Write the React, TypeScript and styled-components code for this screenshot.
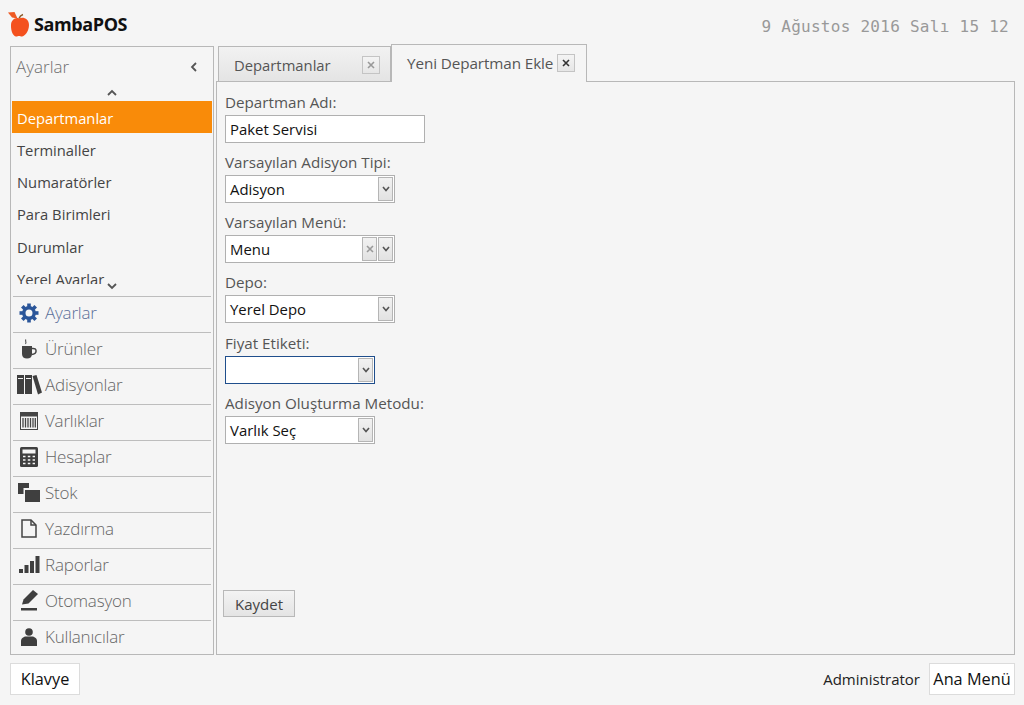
import React from "react";
import styled, { createGlobalStyle } from "styled-components";

const GlobalStyle = createGlobalStyle`
  html, body {
    margin: 0;
    height: 705px;
    overflow: hidden;
    background: #f5f5f5;
  }
  * {
    box-sizing: border-box;
  }
`;

const FONT = `"Open Sans", "Noto Sans", sans-serif`;

const AppleLogo = () => (
  <svg width="22" height="25" viewBox="0 0 22 25">
    <path d="M0 0.5 L6.5 0 L9.5 6.5 L4 5.5 Z" fill="#ee5a24" />
    <path d="M11 6.5 Q12 3.5 15 2.5" fill="none" stroke="#8a5a28" strokeWidth="1.5" />
    <path
      d="M11 6.5 C15 4.5 21 6.5 21 13 C21 19.5 16.5 24.5 14 24.5 C12.8 24.5 12 24 11 24 C10 24 9.3 24.5 8 24.5 C5.5 24.5 2.7 19.5 3 13 C3.2 8 7.5 5 11 6.5 Z"
      fill="#f4511e"
    />
  </svg>
);

const GearIcon = () => (
  <svg width="20" height="20" viewBox="0 0 20 20">
    <circle cx="10" cy="10" r="5.2" fill="none" stroke="#2a5599" strokeWidth="3.4" />
    <g stroke="#2a5599" strokeWidth="3.6">
      <path d="M10 0.5V4" />
      <path d="M10 16V19.5" />
      <path d="M0.5 10H4" />
      <path d="M16 10H19.5" />
      <path d="M3.3 3.3L5.8 5.8" />
      <path d="M14.2 14.2L16.7 16.7" />
      <path d="M3.3 16.7L5.8 14.2" />
      <path d="M14.2 5.8L16.7 3.3" />
    </g>
  </svg>
);

const CupIcon = () => (
  <svg width="16" height="20" viewBox="0 0 16 20">
    <path d="M5 0.5C3.5 2 6 3 4.5 5" fill="none" stroke="#555" strokeWidth="1.1" />
    <path d="M1 7H11V15C11 18 9 19.5 6 19.5C3 19.5 1 18 1 15Z" fill="#444" />
    <path d="M11 9.5C16.5 8.5 16.5 15 10.5 15.5" fill="none" stroke="#444" strokeWidth="1.5" />
  </svg>
);

const BooksIcon = () => (
  <svg width="25" height="20" viewBox="0 0 25 20">
    <rect x="0" y="0" width="7" height="19" fill="#3f3f3f" />
    <rect x="8" y="0" width="7" height="19" fill="#3f3f3f" />
    <path d="M1 3.5H6M9 3.5H14" stroke="#f5f5f5" strokeWidth="1" />
    <path d="M15.5 1L19.5 0L25 17.5L21 19.5Z" fill="#3f3f3f" />
  </svg>
);

const TableIcon = () => (
  <svg width="18" height="18" viewBox="0 0 18 18">
    <rect x="0.5" y="0.5" width="17" height="17" fill="none" stroke="#444" />
    <rect x="0.5" y="0.5" width="17" height="4" fill="#444" />
    <path d="M3 6V15.5M5.5 6V15.5M8 6V15.5M10.5 6V15.5M13 6V15.5M15.3 6V15.5" stroke="#444" strokeWidth="1.3" />
  </svg>
);

const CalculatorIcon = () => (
  <svg width="18" height="20" viewBox="0 0 18 20">
    <rect x="0" y="0" width="18" height="20" rx="1.5" fill="#3f3f3f" />
    <rect x="2.5" y="2.5" width="13" height="4" fill="#f5f5f5" />
    <path d="M3 9.5H5.5M7.8 9.5H10.3M12.6 9.5H15M3 13H5.5M7.8 13H10.3M12.6 13H15M3 16.5H5.5M7.8 16.5H10.3M12.6 16.5H15" stroke="#f5f5f5" strokeWidth="1.7" />
  </svg>
);

const StockIcon = () => (
  <svg width="22" height="20" viewBox="0 0 22 20">
    <path d="M0 0H11V5H5.5V11H0Z" fill="#3f3f3f" />
    <rect x="7" y="7" width="15" height="12" fill="#3f3f3f" />
  </svg>
);

const PageIcon = () => (
  <svg width="16" height="19" viewBox="0 0 16 19">
    <path d="M1 1H10L15 6V18H1Z" fill="none" stroke="#444" strokeWidth="1.5" />
    <path d="M10 1V6H15" fill="none" stroke="#444" strokeWidth="1.5" />
  </svg>
);

const BarsIcon = () => (
  <svg width="21" height="17" viewBox="0 0 21 17">
    <rect x="0" y="13" width="4" height="4" fill="#3f3f3f" />
    <rect x="5.5" y="9" width="4" height="8" fill="#3f3f3f" />
    <rect x="11" y="5" width="4" height="12" fill="#3f3f3f" />
    <rect x="16.5" y="0" width="4" height="17" fill="#3f3f3f" />
  </svg>
);

const PenIcon = () => (
  <svg width="17" height="21" viewBox="0 0 17 21">
    <path d="M12 0L17 4L7.5 13.5L1 14.5L2.5 9.5Z" fill="#3f3f3f" />
    <rect x="0" y="18" width="16" height="2.5" fill="#3f3f3f" />
  </svg>
);

const UserIcon = () => (
  <svg width="16" height="18" viewBox="0 0 16 18">
    <circle cx="8" cy="4" r="3.8" fill="#3f3f3f" />
    <path d="M0 18V13C0 10 3 8.5 5 8.5H11C13 8.5 16 10 16 13V18Z" fill="#3f3f3f" />
  </svg>
);

const Chevron = ({ dir }: { dir: "up" | "down" | "left" }) => {
  const d = dir === "up" ? "M1 6L5 2L9 6" : dir === "down" ? "M1 2L5 6L9 2" : "M6 1L2 5L6 9";
  return (
    <svg width="10" height="10" viewBox="0 0 10 8" style={{ overflow: "visible", flexShrink: 0 }}>
      <path d={d} fill="none" stroke="#555" strokeWidth="1.8" />
    </svg>
  );
};

const ComboArrow = () => (
  <svg width="8" height="6" viewBox="0 0 8 6">
    <path d="M1 1L4 4.5L7 1" fill="none" stroke="#555" strokeWidth="1.6" />
  </svg>
);

const CrossIcon = ({ dark }: { dark?: boolean }) => (
  <svg width="8" height="8" viewBox="0 0 8 8">
    <path d="M1 1L7 7M7 1L1 7" stroke={dark ? "#333" : "#999"} strokeWidth="1.6" />
  </svg>
);

const navItems = [
  { label: "Ayarlar", icon: <GearIcon />, active: true },
  { label: "Ürünler", icon: <CupIcon /> },
  { label: "Adisyonlar", icon: <BooksIcon /> },
  { label: "Varlıklar", icon: <TableIcon /> },
  { label: "Hesaplar", icon: <CalculatorIcon /> },
  { label: "Stok", icon: <StockIcon /> },
  { label: "Yazdırma", icon: <PageIcon /> },
  { label: "Raporlar", icon: <BarsIcon /> },
  { label: "Otomasyon", icon: <PenIcon /> },
  { label: "Kullanıcılar", icon: <UserIcon /> },
];

const subItems = ["Departmanlar", "Terminaller", "Numaratörler", "Para Birimleri", "Durumlar", "Yerel Ayarlar"];

function ComboField({
  label,
  value,
  width,
  clearable,
  focused,
  tall,
}: {
  label: string;
  value: string;
  width: number;
  clearable?: boolean;
  focused?: boolean;
  tall?: boolean;
}) {
  return (
    <Field $tall={tall}>
      <FieldLabel>{label}</FieldLabel>
      <Combo $width={width} $focused={focused}>
        <ComboValue>{value}</ComboValue>
        {clearable && (
          <ComboButton>
            <CrossIcon />
          </ComboButton>
        )}
        <ComboButton>
          <ComboArrow />
        </ComboButton>
      </Combo>
    </Field>
  );
}

export default function App() {
  return (
    <Page>
      <GlobalStyle />
      <Header>
        <Logo>
          <AppleLogo />
          <LogoText>SambaPOS</LogoText>
        </Logo>
        <Clock>9 Ağustos 2016 Salı 15 12</Clock>
      </Header>

      <Body>
        <Sidebar>
          <SidebarTitle>
            <span>Ayarlar</span>
            <Chevron dir="left" />
          </SidebarTitle>
          <ScrollArrow>
            <Chevron dir="up" />
          </ScrollArrow>
          <SubList>
            {subItems.map((item, i) => (
              <SubItem key={item} $selected={i === 0}>
                {item}
              </SubItem>
            ))}
          </SubList>
          <BottomArrow>
            <Chevron dir="down" />
          </BottomArrow>
          <Nav>
            {navItems.map((item) => (
              <NavRow key={item.label}>
                <NavIcon>{item.icon}</NavIcon>
                <NavLabel $active={item.active}>{item.label}</NavLabel>
              </NavRow>
            ))}
          </Nav>
        </Sidebar>

        <Main>
          <Tabs>
            <Tab>
              <TabLabel>Departmanlar</TabLabel>
              <CloseButton>
                <CrossIcon />
              </CloseButton>
            </Tab>
            <ActiveTab>
              <ActiveTabLabel>Yeni Departman Ekle</ActiveTabLabel>
              <CloseButton>
                <CrossIcon dark />
              </CloseButton>
            </ActiveTab>
          </Tabs>
          <Panel>
            <Form>
              <Field>
                <FieldLabel>Departman Adı:</FieldLabel>
                <TextBox>Paket Servisi</TextBox>
              </Field>
              <ComboField label="Varsayılan Adisyon Tipi:" value="Adisyon" width={170} />
              <ComboField label="Varsayılan Menü:" value="Menu" width={170} clearable />
              <ComboField label="Depo:" value="Yerel Depo" width={170} tall />
              <ComboField label="Fiyat Etiketi:" value="" width={150} focused />
              <ComboField label="Adisyon Oluşturma Metodu:" value="Varlık Seç" width={150} />
            </Form>
            <SaveButton>Kaydet</SaveButton>
          </Panel>
        </Main>
      </Body>

      <Footer>
        <FooterButton $width={70}>Klavye</FooterButton>
        <FooterRight>
          <UserName>Administrator</UserName>
          <FooterButton $width={86}>Ana Menü</FooterButton>
        </FooterRight>
      </Footer>
    </Page>
  );
}

const Page = styled.div`
  width: 1024px;
  height: 705px;
  display: flex;
  flex-direction: column;
  background: #f5f5f5;
  font-family: ${FONT};
  overflow: hidden;
`;

const Header = styled.header`
  height: 46px;
  flex-shrink: 0;
  padding: 0 15px 0 8px;
  display: flex;
  align-items: center;
  justify-content: space-between;
`;

const Logo = styled.div`
  display: flex;
  align-items: center;
  gap: 4px;
  margin-top: 2px;
`;

const LogoText = styled.span`
  font-size: 18px;
  font-weight: 700;
  letter-spacing: -0.4px;
  color: #111;
`;

const Clock = styled.div`
  font-family: "DejaVu Sans Mono", monospace;
  font-size: 16px;
  letter-spacing: 0.27px;
  color: #999;
  margin-top: 7px;
  white-space: nowrap;
`;

const Body = styled.div`
  height: 609px;
  flex-shrink: 0;
  padding: 0 9px 0 10px;
  display: flex;
  gap: 2px;
`;

const Sidebar = styled.aside`
  width: 204px;
  flex-shrink: 0;
  border: 1px solid #b8b8b8;
  display: flex;
  flex-direction: column;
`;

const SidebarTitle = styled.div`
  height: 38px;
  flex-shrink: 0;
  padding: 0 13px 0 5px;
  display: flex;
  align-items: center;
  justify-content: space-between;
  font-size: 17px;
  font-weight: 300;
  color: #6e6e6e;
`;

const ScrollArrow = styled.div`
  height: 16px;
  flex-shrink: 0;
  display: flex;
  align-items: center;
  justify-content: center;
`;

const SubList = styled.div`
  height: 183px;
  flex-shrink: 0;
  padding: 0 1px;
  overflow: hidden;
`;

const SubItem = styled.div<{ $selected?: boolean }>`
  height: 32.25px;
  padding: 1px 0 0 5px;
  display: flex;
  align-items: center;
  font-size: 14.75px;
  color: ${({ $selected }) => ($selected ? "#fff" : "#444")};
  background: ${({ $selected }) => ($selected ? "#f98b09" : "transparent")};
`;

const BottomArrow = styled.div`
  height: 12px;
  flex-shrink: 0;
  padding-bottom: 8px;
  display: flex;
  align-items: center;
  justify-content: center;
`;

const Nav = styled.nav`
  flex: 1;
  padding: 0 2px;
  display: flex;
  flex-direction: column;
`;

const NavRow = styled.div`
  height: 36px;
  flex-shrink: 0;
  padding-bottom: 4px;
  border-top: 1px solid #bdbdbd;
  display: flex;
  align-items: center;
`;

const NavIcon = styled.div`
  width: 32px;
  flex-shrink: 0;
  display: flex;
  align-items: center;
  justify-content: center;
`;

const NavLabel = styled.span<{ $active?: boolean }>`
  font-size: 17px;
  font-weight: 300;
  letter-spacing: -0.2px;
  color: ${({ $active }) => ($active ? "#5a6f99" : "#666")};
`;

const Main = styled.main`
  flex: 1;
  min-width: 0;
  display: flex;
  flex-direction: column;
`;

const Tabs = styled.div`
  height: 35px;
  flex-shrink: 0;
  padding-left: 2px;
  display: flex;
  align-items: flex-end;
  position: relative;
  z-index: 1;
`;

const Tab = styled.div`
  width: 173px;
  height: 35px;
  padding: 2px 10px 0 15px;
  border: 1px solid #b8b8b8;
  border-bottom: none;
  background: linear-gradient(#f2f2f2, #e4e4e4);
  display: flex;
  align-items: center;
  justify-content: space-between;
`;

const ActiveTab = styled.div`
  width: 196px;
  height: 38px;
  margin-bottom: -1px;
  padding: 0 11px 2px 15px;
  border: 1px solid #b8b8b8;
  border-bottom: none;
  background: #f5f5f5;
  display: flex;
  align-items: center;
  justify-content: space-between;
`;

const TabLabel = styled.span`
  font-size: 14.8px;
  line-height: 20px;
  color: #555;
  white-space: nowrap;
`;

const ActiveTabLabel = styled(TabLabel)`
  font-size: 15.25px;
  letter-spacing: -0.1px;
`;

const CloseButton = styled.div`
  width: 18px;
  height: 18px;
  border: 1px solid #c4c4c4;
  background: linear-gradient(#f4f4f4, #e6e6e6);
  display: flex;
  align-items: center;
  justify-content: center;
`;

const Panel = styled.section`
  flex: 1;
  border: 1px solid #b8b8b8;
  padding: 11px 0 37px 6px;
  display: flex;
  flex-direction: column;
  align-items: flex-start;
`;

const Form = styled.div`
  flex: 1;
  padding-left: 2px;
  display: flex;
  flex-direction: column;
`;

const Field = styled.div<{ $tall?: boolean }>`
  height: ${({ $tall }) => ($tall ? 61 : 60)}px;
  flex-shrink: 0;
  display: flex;
  flex-direction: column;
`;

const FieldLabel = styled.label`
  height: 22px;
  font-size: 15.2px;
  line-height: 18px;
  color: #555;
  white-space: nowrap;
`;

const TextBox = styled.div`
  width: 200px;
  height: 28px;
  border: 1px solid #b0b0b0;
  background: #fff;
  padding-left: 4px;
  display: flex;
  align-items: center;
  font-size: 14.9px;
  color: #111;
`;

const Combo = styled.div<{ $width: number; $focused?: boolean }>`
  width: ${({ $width }) => $width}px;
  height: 28px;
  border: 1px solid ${({ $focused }) => ($focused ? "#1f4e8c" : "#b0b0b0")};
  background: #fff;
  padding: 1px 1px 1px 4px;
  display: flex;
  align-items: stretch;
  gap: 1px;
`;

const ComboValue = styled.div`
  flex: 1;
  min-width: 0;
  display: flex;
  align-items: center;
  font-size: 14.9px;
  color: #111;
`;

const ComboButton = styled.div`
  width: 15px;
  flex-shrink: 0;
  border: 1px solid #b5b5b5;
  background: linear-gradient(#f2f2f2, #e2e2e2);
  display: flex;
  align-items: center;
  justify-content: center;
`;

const SaveButton = styled.div`
  width: 72px;
  height: 27px;
  border: 1px solid #b8b8b8;
  background: linear-gradient(#f3f3f3, #e4e4e4);
  display: flex;
  align-items: center;
  justify-content: center;
  font-size: 15px;
  color: #444;
`;

const Footer = styled.footer`
  flex: 1;
  padding: 8px 9px 9px 10px;
  display: flex;
  align-items: flex-start;
  justify-content: space-between;
`;

const FooterRight = styled.div`
  display: flex;
  align-items: center;
  gap: 9px;
`;

const FooterButton = styled.div<{ $width: number }>`
  width: ${({ $width }) => $width}px;
  height: 32px;
  border: 1px solid #dcdcdc;
  background: #fff;
  display: flex;
  align-items: center;
  justify-content: center;
  font-size: 16.3px;
  color: #111;
`;

const UserName = styled.span`
  font-size: 15px;
  color: #222;
`;
